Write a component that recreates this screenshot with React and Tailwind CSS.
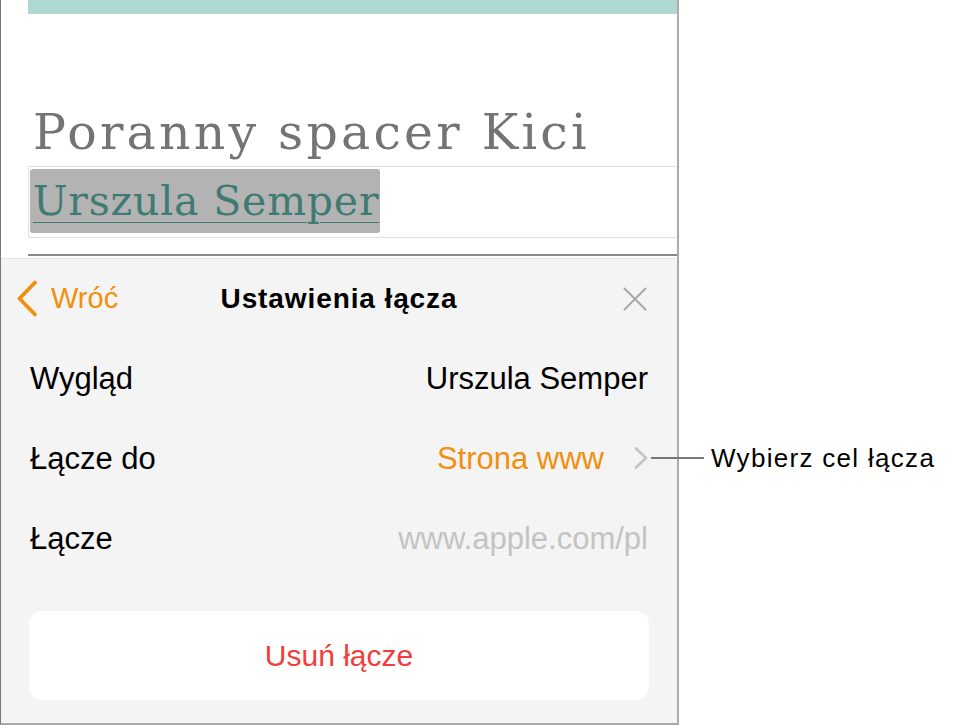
import React from "react";

const sans = { fontFamily: '"Liberation Sans", Arial, sans-serif' };

function Row({ label, children }) {
  return (
    <div className="h-[80px] flex items-center justify-between pl-[29px] pr-[29px] text-[31px] leading-none text-black">
      <span>{label}</span>
      {children}
    </div>
  );
}

export default function App() {
  return (
    <div className="w-[955px] h-[726px] bg-white flex" style={sans}>
      <div className="w-[679px] h-[725px] border-l border-l-[#777777] border-r-2 border-r-[#ababab] border-b-2 border-b-[#a8a8a8] flex flex-col">
        {/* document area */}
        <div className="h-[258px] bg-white pl-[27px] flex flex-col">
          <div className="h-[14px] bg-[#b0d8d3]" />
          <div
            className="mt-[94px] h-[49px] pl-[5px] text-[49px] leading-[49px] text-[#747474] whitespace-nowrap tracking-[3.2px]"
            style={{ fontFamily: '"DejaVu Serif", serif' }}
          >
            Poranny spacer Kici
          </div>
          <div className="mt-[9px] h-[72px] border border-[#e0e0e0] border-r-0 pl-px pt-[2px]">
            <div className="w-[350px] h-[64px] rounded-[3px] bg-[#b3b3b3] flex items-center pl-[3px]">
              <span
                className="text-[41px] leading-none text-[#3f7b72] underline decoration-1 underline-offset-[7px] whitespace-nowrap tracking-[0.8px]"
                style={{ fontFamily: '"DejaVu Serif", serif' }}
              >
                Urszula Semper
              </span>
            </div>
          </div>
          <div className="mt-[16px] h-[2px] bg-[#8a8a8a]" />
        </div>

        {/* link settings panel */}
        <div className="flex-1 bg-[#f4f4f4] border-t border-[#e3e3e3] flex flex-col">
          <div className="h-[79px] grid grid-cols-[1fr_auto_1fr] items-center">
            <div className="flex items-center pl-[15px] gap-[13px]">
              <svg width="22" height="37" viewBox="0 0 22 37" fill="none">
                <polyline points="19,2.5 3.5,18.5 19,34.5" stroke="#f0900e" strokeWidth="3.8" strokeLinecap="round" strokeLinejoin="round" />
              </svg>
              <span className="text-[29px] leading-none text-[#f0900e]">Wróć</span>
            </div>
            <div className="text-[28px] leading-none font-bold text-black tracking-[0.9px]">Ustawienia łącza</div>
            <div className="flex justify-end pr-[30px]">
              <svg width="24" height="24" viewBox="0 0 24 24" fill="none">
                <path d="M1.5 1.5 L22.5 22.5 M22.5 1.5 L1.5 22.5" stroke="#a8a8a8" strokeWidth="2" strokeLinecap="round" />
              </svg>
            </div>
          </div>

          <Row label="Wygląd">
            <span>Urszula Semper</span>
          </Row>
          <Row label="Łącze do">
            <div className="flex items-center gap-[30px]">
              <span className="text-[#f0900e]">Strona www</span>
              <div className="relative">
                <svg width="14" height="22" viewBox="0 0 14 22" fill="none">
                  <polyline points="2,1.5 12,11 2,20.5" stroke="#c4c4c4" strokeWidth="2.6" strokeLinecap="round" strokeLinejoin="round" />
                </svg>
                <div className="absolute left-full top-1/2 -translate-y-1/2 ml-[3px] flex items-center gap-[7px]">
                  <div className="w-[53px] h-[1.5px] bg-[#777777]" />
                  <span className="text-[26px] leading-none text-black whitespace-nowrap tracking-[1.3px]">Wybierz cel łącza</span>
                </div>
              </div>
            </div>
          </Row>
          <Row label="Łącze">
            <span className="text-[#c3c3c3]">www.apple.com/pl</span>
          </Row>

          <div className="mt-[33px] mx-[28px] h-[89px] rounded-[13px] bg-white flex items-center justify-center">
            <span className="text-[30px] leading-none text-[#f23d3d]">Usuń łącze</span>
          </div>
        </div>
      </div>
    </div>
  );
}
